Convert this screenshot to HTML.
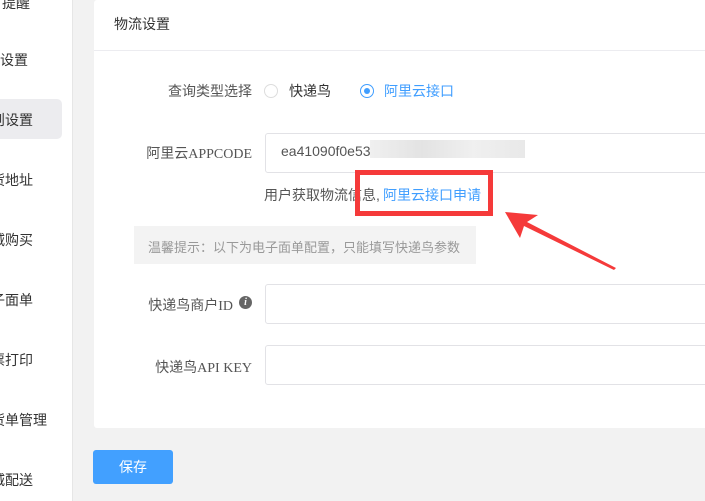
<!DOCTYPE html><html><head><meta charset="utf-8"><style>
body{margin:0;width:705px;height:501px;overflow:hidden;background:#f2f2f2;font-family:"Liberation Sans","Noto Sans CJK SC",sans-serif;font-size:14px;color:#333;position:relative}
.sb{position:absolute;left:0;top:0;width:72px;height:501px;background:#fff;border-right:1px solid #e6e6e6}
.sb div{position:absolute;right:39px;white-space:nowrap;font-size:14px;color:#333;line-height:20px}
.sb .act{position:absolute;left:0;top:99px;width:62px;height:40px;background:#ececef;border-radius:0 5px 5px 0}
.card{position:absolute;left:94px;top:0;width:620px;height:428px;background:#fff;border-radius:3px}
.hd{position:absolute;left:114px;top:14px;font-size:14px;color:#333}
.line{position:absolute;left:94px;top:50px;width:611px;height:1px;background:#ececf0}
.lab{position:absolute;right:453px;font-family:"Liberation Serif","Noto Sans CJK SC",serif;color:#555;white-space:nowrap}
.inp{position:absolute;left:265px;width:460px;height:38px;border:1px solid #e2e2e6;border-radius:3px;background:#fff}
.t{position:absolute;white-space:nowrap}
</style></head><body>
<div class="sb">
<div class="act" style="right:auto"></div>
<div style="top:-7px;right:42px">提醒</div>
<div style="top:50px;right:44px">设置</div>
<div style="top:110px;right:39px">则设置</div>
<div style="top:170px;right:39px">货地址</div>
<div style="top:230px;right:39px">减购买</div>
<div style="top:290px;right:39px">子面单</div>
<div style="top:350px;right:39px">票打印</div>
<div style="top:410px;right:25px">货单管理</div>
<div style="top:470px;right:39px">城配送</div>
</div>
<div class="card"></div>
<div class="hd">物流设置</div>
<div class="line"></div>
<div class="lab" style="top:81px">查询类型选择</div>
<div style="position:absolute;left:264px;top:84px;width:12px;height:12px;border:1px solid #ddd;border-radius:50%"></div>
<div class="t" style="left:289px;top:81px">快递鸟</div>
<div style="position:absolute;left:360px;top:84px;width:12px;height:12px;border:1px solid #409eff;border-radius:50%;background:#fff"><div style="position:absolute;left:3px;top:3px;width:6px;height:6px;border-radius:50%;background:#409eff"></div></div>
<div class="t" style="left:384px;top:81px;color:#409eff">阿里云接口</div>
<div class="lab" style="top:143px">阿里云APPCODE</div>
<div class="inp" style="top:133px"></div>
<div class="t" style="left:281px;top:143px;color:#555">ea41090f0e53</div>
<div style="position:absolute;left:370px;top:140px;width:155px;height:18px;background:linear-gradient(90deg,#eee,#e0e0e0,#eee,#e6e6e6);opacity:.9"></div>
<div class="t" style="left:264px;top:185px;color:#555;font-size:14px">用户获取物流信息,</div>
<div class="t" style="left:383px;top:185px;color:#409eff;font-size:14px">阿里云接口申请</div>
<div style="position:absolute;left:355px;top:170px;width:128px;height:36px;border:5px solid #f53a3a"></div>
<svg style="position:absolute;left:0;top:0" width="705" height="501"><polygon points="505,212 538,215 527,222 616,268 614,270 524,226 520,238" fill="#f53a3a"/></svg>
<div style="position:absolute;left:134px;top:226px;width:342px;height:38px;background:#f3f3f3"></div>
<div class="t" style="left:148px;top:237px;color:#999;font-size:13px">温馨提示：以下为电子面单配置，只能填写快递鸟参数</div>
<div class="lab" style="top:295px;right:472px">快递鸟商户ID</div>
<div style="position:absolute;left:239px;top:296px;width:13px;height:13px;border-radius:50%;background:#666;color:#fff;font-size:10px;line-height:13px;text-align:center;font-style:italic;font-weight:bold;font-family:'Liberation Serif',serif">i</div>
<div class="inp" style="top:284px"></div>
<div class="lab" style="top:357px">快递鸟API KEY</div>
<div class="inp" style="top:345px"></div>
<div style="position:absolute;left:93px;top:450px;width:80px;height:34px;background:#42a0ff;border-radius:3px;color:#fff;text-align:center;line-height:34px">保存</div>
</body></html>
